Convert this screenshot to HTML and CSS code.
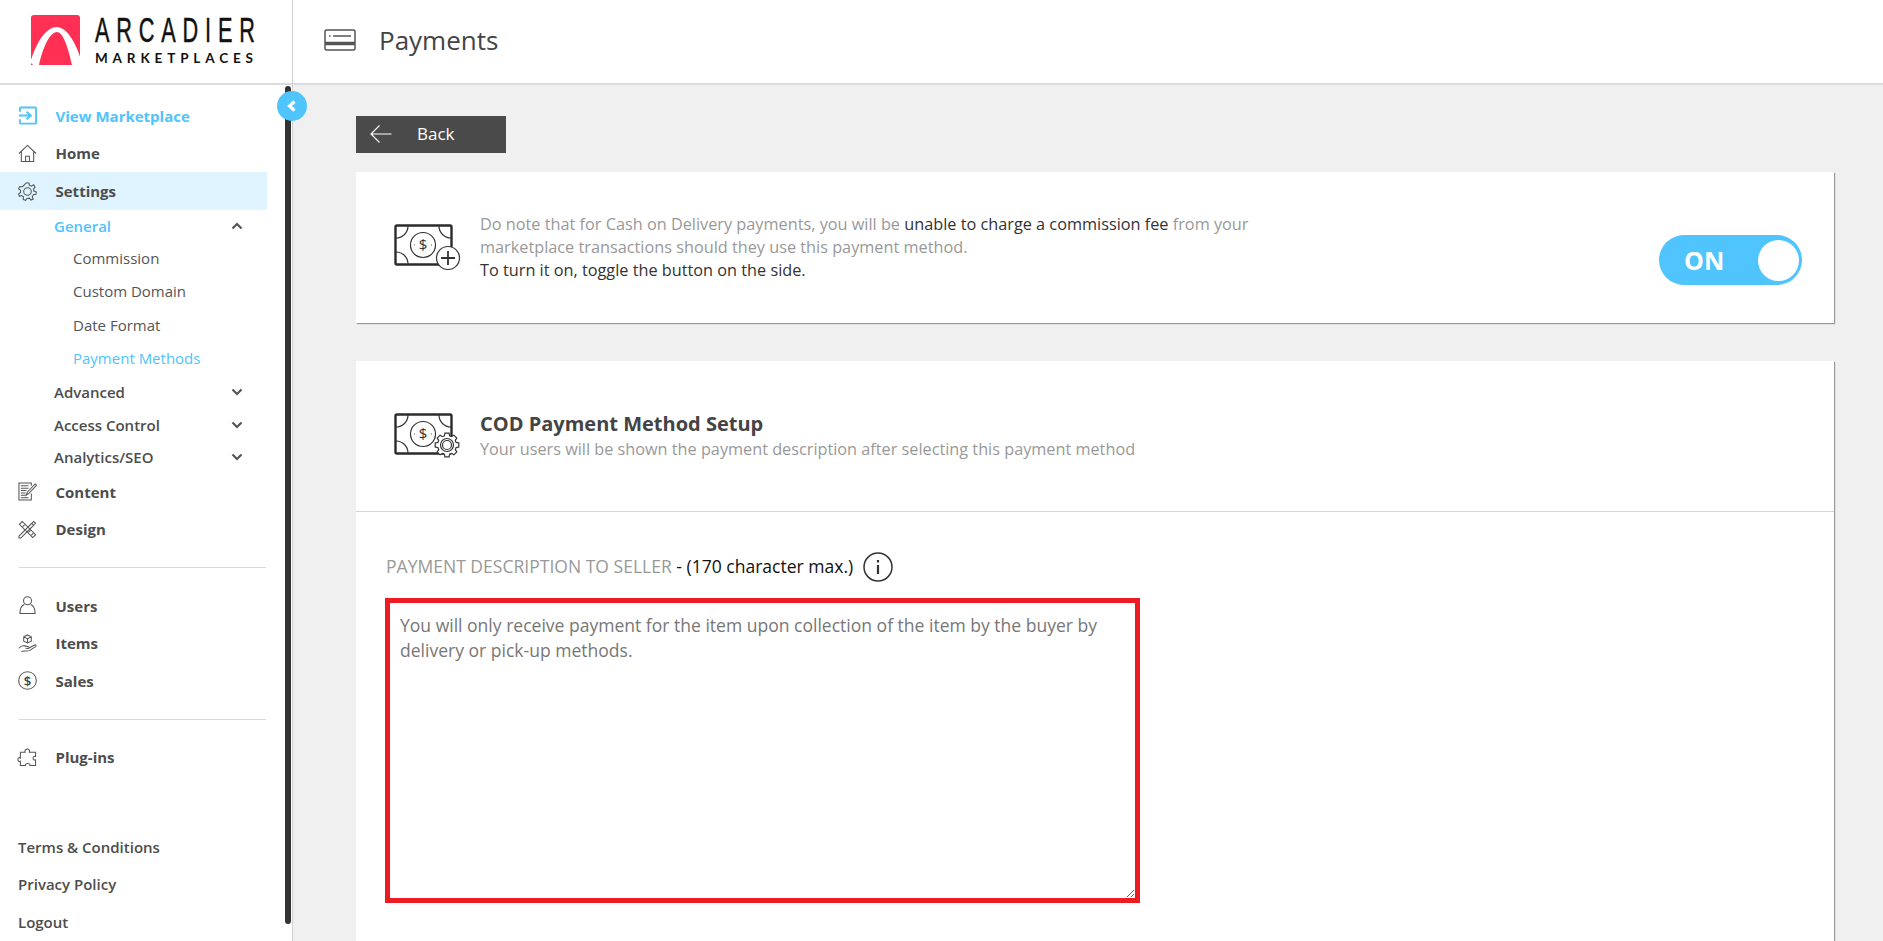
FILE: index.html
```html
<!DOCTYPE html>
<html lang="en">
<head>
<meta charset="utf-8">
<title>Payments</title>
<link rel="stylesheet" href="styles.css">
</head>
<body>
<div class="app">
  <aside class="sidebar">
    <div class="brand">
      <svg class="logo" width="290" height="70" viewBox="0 0 290 70">
        <path class="logo-red" d="M34 15H77a3 3 0 0 1 3 3V65H31V18a3 3 0 0 1 3-3Z"/>
        <path class="logo-arc" d="M31 60C38 39 47 27 57 27C66 27 75 41 80.500 58V65H72C68 47 63 32 57 32C50 32 43 47 39 65H33L31 63Z"/>
        <text class="logo-top" transform="translate(95 42) scale(.62 1)">ARCADIER</text>
        <text class="logo-sub" x="95" y="63" textLength="158">MARKETPLACES</text>
      </svg>
    </div>
    <nav class="nav">
      <a class="row accent">
        <svg class="ico" viewBox="0 0 20 20"><path class="ic-blue" d="M2 6V2.500A1 1 0 0 1 3 1.500H18A1 1 0 0 1 19 2.500V17.500A1 1 0 0 1 18 18.500H3A1 1 0 0 1 2 17.500V14M1 10H13M9 6L13.500 10L9 14"/></svg>
        <span>View Marketplace</span>
      </a>
      <a class="row">
        <svg class="ico" viewBox="0 0 20 20"><path class="ic" d="M1 10L10 1.500L19 10M3.500 8V18.500H16.500V8M8 18.500V13H12V18.500"/></svg>
        <span>Home</span>
      </a>
      <a class="row current">
        <svg class="ico" viewBox="0 0 20 20"><circle class="ic" cx="10" cy="10" r="4"/><path class="ic" d="M8.500 1H11.500L12 3.500L14.200 4.500L16.500 3L18 5.500L16.300 7.300L16.800 9.500L19.300 10.500L18.800 13L16.200 13.500L15 15.500L16 18L13.500 19L12 17L9.500 17.300L8 19.300L5.500 18.300L5.800 15.800L4 14.300L1.500 15L.7 12.500L2.700 11L2.700 8.800L.7 7.300L1.700 4.800L4.200 5.200L6 3.700Z"/></svg>
        <span>Settings</span>
      </a>
      <a class="group group-general accent">
        <span>General</span>
        <svg class="chev" viewBox="0 0 12 8"><path d="M1.500 6.500L6 2L10.500 6.500"/></svg>
      </a>
      <a class="sub">Commission</a>
      <a class="sub">Custom Domain</a>
      <a class="sub">Date Format</a>
      <a class="sub accent">Payment Methods</a>
      <a class="group">
        <span>Advanced</span>
        <svg class="chev" viewBox="0 0 12 8"><path d="M1.500 1.500L6 6L10.500 1.500"/></svg>
      </a>
      <a class="group">
        <span>Access Control</span>
        <svg class="chev" viewBox="0 0 12 8"><path d="M1.500 1.500L6 6L10.500 1.500"/></svg>
      </a>
      <a class="group group-last">
        <span>Analytics/SEO</span>
        <svg class="chev" viewBox="0 0 12 8"><path d="M1.500 1.500L6 6L10.500 1.500"/></svg>
      </a>
      <a class="row">
        <svg class="ico" viewBox="0 0 20 20"><path class="ic" d="M14 4V1H1V19H14V12M3 4H11M3 6.500H11M3 9H9M3 11.500H8M3 14H8M3 16.500H11"/><path class="ic" d="M8.500 14L10 10.500L18 2L19.500 3.500L11.500 12Z"/></svg>
        <span>Content</span>
      </a>
      <a class="row">
        <svg class="ico" viewBox="0 0 20 20"><path class="ic" d="M1 17L14.500 3.500L16.500 5.500L3 19H1ZM15 3L16.500 1.500L18.500 3.500L17 5M4.500 1.500L1.500 4.500L15.500 18.500L18.500 15.500ZM5 7L7 5M8 10L10 8M11 13L13 11M14 16L16 14"/></svg>
        <span>Design</span>
      </a>
      <hr class="rule">
      <a class="row">
        <svg class="ico" viewBox="0 0 20 20"><circle class="ic" cx="10" cy="5" r="4.200"/><path class="ic" d="M6.500 9C3 10.500 2 13 2 18.500H18C18 13 17 10.500 13.500 9"/></svg>
        <span>Users</span>
      </a>
      <a class="row">
        <svg class="ico" viewBox="0 0 20 20"><path class="ic" d="M10 1L14 3V7.500L10 9.500L6 7.500V3ZM6 3L10 5L14 3M10 5V9.500M1 15C3 12.500 5 12 7 12.500L11 13.500C12.500 14 12 15.500 10.500 15.300L8 15M12 14.500L17.500 11.500C19 11 19.500 12.500 18.500 13.300L12 17.500C9 18.500 6 17 3.500 18.500"/></svg>
        <span>Items</span>
      </a>
      <a class="row">
        <svg class="ico" viewBox="0 0 20 20"><circle class="ic" cx="10" cy="10" r="9.300"/><text class="ic-dollar" x="10" y="15.500" text-anchor="middle">$</text></svg>
        <span>Sales</span>
      </a>
      <hr class="rule">
      <a class="row">
        <svg class="ico" viewBox="0 0 20 20"><path class="ic" d="M7.500 4.500C6 0 13.500 0 12 4.500H18.500V9C15 7.500 15 14 18.500 12.500V18.500H12.500C13.500 15.500 7 15.500 8 18.500H2.500V14C-1 15.500 -1 8.500 2.500 10.500V4.500Z"/></svg>
        <span>Plug-ins</span>
      </a>
      <div class="legal">
        <a class="row plain">Terms &amp; Conditions</a>
        <a class="row plain">Privacy Policy</a>
        <a class="row plain">Logout</a>
      </div>
    </nav>
    <div class="scroll-thumb"></div>
    <button class="collapse" type="button" aria-label="Collapse">
      <svg viewBox="0 0 12 12" width="12" height="12"><path d="M8.500 1.500L3.500 6L8.500 10.500"/></svg>
    </button>
  </aside>
  <main class="main">
    <header class="topbar">
      <svg class="card-ico" viewBox="0 0 32 22"><rect x="1" y="1" width="30" height="20" rx="1.500"/><path class="thick" d="M1 14.500H31"/><path d="M5 7H6.500M9 7H27"/></svg>
      <h1 class="title">Payments</h1>
    </header>
    <div class="content">
      <a class="back">
        <svg viewBox="0 0 24 20" width="24" height="20"><path d="M22.500 10H2M10.500 1.500L2 10L10.500 18.500"/></svg>
        <span>Back</span>
      </a>
      <section class="panel panel-note">
        <svg class="money" viewBox="0 0 70 50" width="70" height="50">
          <rect class="bill" x="1.500" y="1.500" width="56" height="39" rx="1.500"/>
          <path d="M14 2A12 12 0 0 1 2 14M45 2A12 12 0 0 0 57 14M2 28A12 12 0 0 1 14 40"/>
          <circle cx="29" cy="21" r="12.500"/>
          <text class="dollar" x="29" y="26" text-anchor="middle">$</text>
          <path d="M20 21H20.800M37.200 21H38"/>
          <circle class="white" cx="54" cy="34" r="11.500"/>
          <path class="plus" d="M54 27V41M47 34H61"/>
        </svg>
        <p class="note">Do note that for Cash on Delivery payments, you will be <b>unable to charge a commission fee</b> from your<br>marketplace transactions should they use this payment method.<br><b>To turn it on, toggle the button on the side.</b></p>
        <div class="toggle"><span>ON</span><i></i></div>
      </section>
      <section class="panel panel-setup">
        <div class="setup-head">
          <svg class="money" viewBox="0 0 70 50" width="70" height="50">
            <rect class="bill" x="1.500" y="1.500" width="56" height="39" rx="1.500"/>
            <path d="M14 2A12 12 0 0 1 2 14M45 2A12 12 0 0 0 57 14M2 28A12 12 0 0 1 14 40"/>
            <circle cx="29" cy="21" r="12.500"/>
            <text class="dollar" x="29" y="26" text-anchor="middle">$</text>
            <path d="M20 21H20.800M37.200 21H38"/>
            <path class="white" transform="translate(53 32)" d="M-2.600-9.100L-2.100-11.800H2.100L2.600-9.100L4.600-8.300L6.900-9.800L9.800-6.900L8.300-4.600L9.100-2.600L11.800-2.100V2.100L9.100 2.600L8.300 4.600L9.800 6.900L6.900 9.800L4.600 8.300L2.600 9.100L2.100 11.800H-2.100L-2.600 9.100L-4.600 8.300L-6.900 9.800L-9.800 6.900L-8.300 4.600L-9.100 2.600L-11.800 2.100V-2.100L-9.100-2.600L-8.300-4.600L-9.800-6.900L-6.900-9.800L-4.600-8.300Z"/>
            <circle cx="53" cy="32" r="6.500"/>
            <circle cx="53" cy="32" r="4.500"/>
          </svg>
          <div>
            <h2 class="setup-title">COD Payment Method Setup</h2>
            <p class="setup-sub">Your users will be shown the payment description after selecting this payment method</p>
          </div>
        </div>
        <div class="setup-body">
          <div class="field-label">
            <label for="desc"><span>PAYMENT DESCRIPTION TO SELLER</span> - (170 character max.)</label>
            <svg class="info" viewBox="0 0 30 30" width="30" height="30"><circle cx="15" cy="15" r="14"/><path class="info-i" d="M15 13V22M15 8V10.500"/></svg>
          </div>
          <textarea class="desc" id="desc">You will only receive payment for the item upon collection of the item by the buyer by delivery or pick-up methods.</textarea>
        </div>
      </section>
    </div>
  </main>
</div>
</body>
</html>
```
FILE: styles.css
```css
* { box-sizing: border-box; }
html, body { margin: 0; height: 941px; overflow: hidden; }
body { font-family: "Open Sans", "Noto Sans", sans-serif; color: #444; background: #f0f0f0; }
a { display: block; color: inherit; text-decoration: none; }

.app { display: flex; height: 941px; }

/* Sidebar */
.sidebar { position: relative; flex: 0 0 293px; height: 941px; background: #fff; border-right: 1px solid #d0d0d0; }
.brand { height: 85px; border-bottom: 2px solid #dcdcdc; }
.logo { display: block; }
.logo-red { fill: #ff3054; }
.logo-arc { fill: #fff; }
.logo-top { font: 400 35px "Liberation Sans", sans-serif; letter-spacing: 11px; fill: #111; stroke: #111; stroke-width: .5px; }
.logo-sub { font: 700 13.500px Lato, sans-serif; fill: #111; }

.nav { padding-top: 12px; }
.row { display: flex; align-items: center; gap: 18.500px; height: 37.500px; padding-left: 18px; width: 267px; font-size: 15px; font-weight: 700; color: #4d4d4d; }
.row.current { height: 38px; background: #dff4ff; }
.row.accent { color: #4fc4fd; }
.row.plain { font-weight: 600; font-size: 15px; color: #4d4d4d; }
.ico { flex: 0 0 19px; width: 19px; height: 19px; overflow: visible; }
.ic { fill: none; stroke: #555; stroke-width: 1.100; }
.ic-blue { fill: none; stroke: #4fc4fd; stroke-width: 2; }
.ic-dollar { font: 600 14px "Open Sans", sans-serif; fill: #444; }

.group { display: flex; align-items: center; justify-content: space-between; height: 33px; width: 267px; padding: 0 24px 0 54px; font-size: 15px; font-weight: 600; color: #4d4d4d; }
.group-general { height: 32px; }
.group-last { height: 32px; }
.group.accent { color: #4fc4fd; }
.chev { width: 12px; height: 8px; }
.chev path { fill: none; stroke: #555; stroke-width: 2.200; }

.sub { height: 33.250px; line-height: 33px; padding-left: 73px; font-size: 15px; color: #555; }
.sub.accent { color: #4fc4fd; }

.rule { width: 247px; height: 1px; margin: 19px 0 19px 19px; border: 0; background: #d8d8d8; }
.legal { margin-top: 52px; }

.scroll-thumb { position: absolute; left: 285px; top: 86px; width: 6px; height: 838px; border-radius: 3px; background: #333; }
.collapse { position: absolute; left: 277px; top: 91px; display: flex; align-items: center; justify-content: center; width: 30px; height: 30px; padding: 0; border: 0; border-radius: 50%; background: #4fc4fd; }
.collapse path { fill: none; stroke: #fff; stroke-width: 3.200; }

/* Main */
.main { flex: 1; min-width: 0; }
.topbar { display: flex; align-items: center; height: 85px; padding: 0 0 3px 31px; background: #fff; border-bottom: 2px solid #dcdcdc; }
.card-ico { width: 32px; height: 22px; margin-right: 23px; }
.card-ico rect, .card-ico path { fill: none; stroke: #555; stroke-width: 1.500; }
.card-ico .thick { stroke-width: 3.500; }
.title { margin: 0; font-size: 26px; font-weight: 500; color: #444; }

.content { padding: 31px 49px 0 63px; }
.back { display: flex; align-items: center; gap: 24px; width: 150px; height: 37px; padding: 0 0 2px 13px; margin-bottom: 19px; font-size: 17px; color: #fff; background: #4a4a4a; }
.back svg { flex: none; }
.back path { fill: none; stroke: #fff; stroke-width: 1.200; }

.panel { background: #fff; box-shadow: 1px 1px 1px #999; }
.panel-note { display: flex; align-items: center; height: 151px; padding: 0 32px 0 38px; margin-bottom: 38px; }
.money { flex: none; margin: 3px 16px 0 0; }
.money path, .money circle { fill: none; stroke: #333; stroke-width: 1.200; }
.money .bill { fill: #fff; stroke: #2b2b2b; stroke-width: 2.400; }
.money .white { fill: #fff; }
.money .plus { stroke-width: 1.800; }
.dollar { font: 400 15px "Open Sans", sans-serif; fill: #333; }

.note { margin: 0; font-size: 16.280px; line-height: 23px; color: #999; }
.note b { font-weight: 400; color: #333; }
.toggle { display: flex; align-items: center; justify-content: space-between; align-self: flex-end; width: 143px; height: 50px; margin: 0 0 38px auto; padding: 0 3px 0 25px; border-radius: 25px; background: #4fc4fd; }
.toggle span { font-size: 25px; font-weight: 700; color: #fff; }
.toggle i { width: 41px; height: 41px; border-radius: 50%; background: #fff; }

.panel-setup { padding-bottom: 100px; }
.setup-head { display: flex; align-items: center; height: 151px; padding-left: 38px; border-bottom: 1px solid #d4d4d4; }
.setup-title { margin: 0; font-size: 20px; line-height: 26px; font-weight: 700; color: #444; }
.setup-sub { margin: 0; font-size: 16.250px; line-height: 24px; color: #999; }
.setup-body { padding: 40px 0 0 29px; }
.field-label { display: flex; align-items: center; gap: 10px; height: 28px; margin-bottom: 18px; padding-left: 1px; font-size: 17.550px; color: #111; }
.field-label span { color: #999; }
.info { margin-top: 2px; }
.info circle { fill: none; stroke: #333; stroke-width: 1.500; }
.info-i { fill: none; stroke: #333; stroke-width: 2.200; }
.desc { display: block; width: 755px; height: 305px; padding: 10px 10px 9px; border: 5px solid #ed1c24; border-radius: 0; outline: 0; font: 17.550px/25px "Open Sans", sans-serif; color: #777; background: #fff; }
```
